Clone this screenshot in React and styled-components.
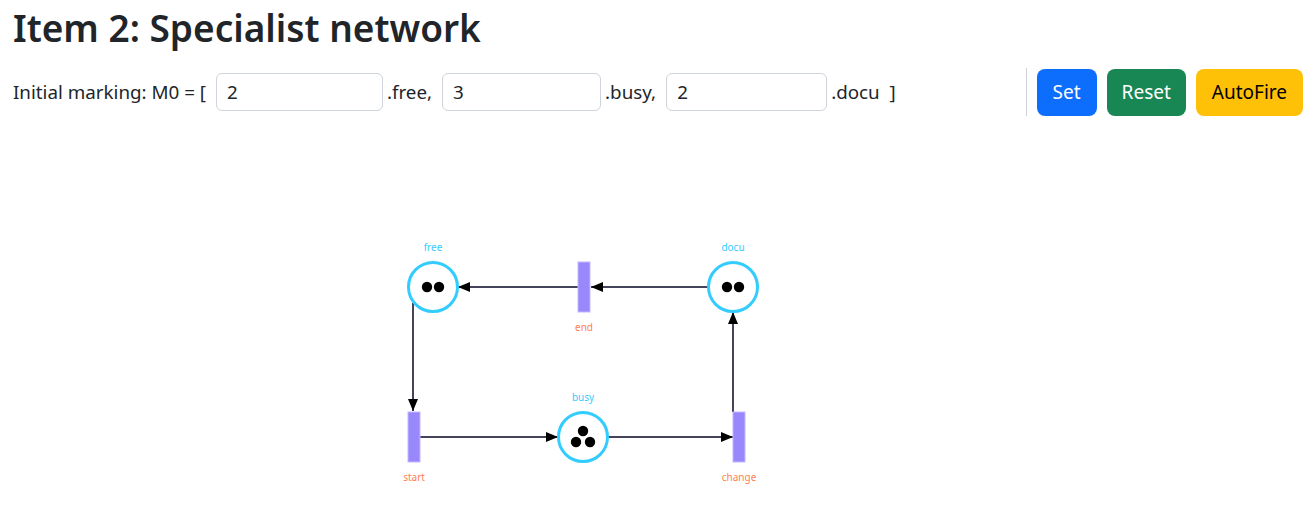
import React from 'react';
import styled, { createGlobalStyle } from 'styled-components';

const GlobalStyle = createGlobalStyle`
  body {
    margin: 0;
    font-family: "Noto Sans", "Open Sans", sans-serif;
    color: #212529;
    background: #fff;
  }
`;

const places = [
  { id: 'free', x: 433, y: 287, tokens: 2 },
  { id: 'docu', x: 733, y: 287, tokens: 2 },
  { id: 'busy', x: 583, y: 437, tokens: 3 },
];

const transitions = [
  { id: 'end', x: 578, y: 262 },
  { id: 'start', x: 408, y: 412 },
  { id: 'change', x: 733, y: 412 },
];

const arcs = [
  { x1: 708, y1: 287, x2: 591, y2: 287 },
  { x1: 578, y1: 287, x2: 458, y2: 287 },
  { x1: 413, y1: 303, x2: 413, y2: 411 },
  { x1: 420, y1: 437, x2: 558, y2: 437 },
  { x1: 608, y1: 437, x2: 733, y2: 437 },
  { x1: 733, y1: 412, x2: 733, y2: 312 },
];

const OFFSET_Y = 130;

function tokenDots(place) {
  if (place.tokens === 2) {
    return [
      [place.x - 6, place.y],
      [place.x + 6, place.y],
    ];
  }
  return [
    [place.x, place.y - 6],
    [place.x - 7, place.y + 5],
    [place.x + 7, place.y + 5],
  ];
}

function PetriNet() {
  return (
    <NetCanvas width="1313" height="377" viewBox={`0 ${OFFSET_Y} 1313 377`}>
      <defs>
        <marker
          id="arrow"
          viewBox="0 0 12 10"
          refX="12"
          refY="5"
          markerWidth="12"
          markerHeight="10"
          markerUnits="userSpaceOnUse"
          orient="auto"
        >
          <path d="M0,0 L12,5 L0,10 z" fill="#000" />
        </marker>
      </defs>
      {arcs.map((a, i) => (
        <line
          key={i}
          x1={a.x1}
          y1={a.y1}
          x2={a.x2}
          y2={a.y2}
          stroke="#44445c"
          strokeWidth="2"
          markerEnd="url(#arrow)"
        />
      ))}
      {transitions.map((t) => (
        <g key={t.id}>
          <rect x={t.x} y={t.y} width="12" height="50" fill="#9988fb" stroke="#c2b8ff" strokeWidth="1" />
          <text x={t.x + 6} y={t.y + 69} textAnchor="middle" fill="#ff7f50" fontSize="10">
            {t.id}
          </text>
        </g>
      ))}
      {places.map((p) => (
        <g key={p.id}>
          <circle cx={p.x} cy={p.y} r="24.5" fill="#fff" stroke="#33ccff" strokeWidth="3" />
          {tokenDots(p).map(([cx, cy], i) => (
            <circle key={i} cx={cx} cy={cy} r="5.2" fill="#000" />
          ))}
          <text x={p.x} y={p.y - 36} textAnchor="middle" fill="#33ccff" fontSize="10">
            {p.id}
          </text>
        </g>
      ))}
    </NetCanvas>
  );
}

export default function App() {
  return (
    <Page>
      <GlobalStyle />
      <Title>Item 2: Specialist network</Title>
      <Toolbar>
        <Marking>
          <Label>Initial marking: M0 = [</Label>
          <Field defaultValue="2" $width={167} />
          <Label>.free,</Label>
          <Field defaultValue="3" $width={159} />
          <Label>.busy,</Label>
          <Field defaultValue="2" $width={161} />
          <Label>.docu&nbsp; ]</Label>
        </Marking>
        <Divider />
        <Button $bg="#0d6efd" $fg="#fff">Set</Button>
        <Button $bg="#198754" $fg="#fff" $pad={15}>Reset</Button>
        <Button $bg="#ffc107" $fg="#000">AutoFire</Button>
      </Toolbar>
      <PetriNet />
    </Page>
  );
}

const Page = styled.div`
  padding: 0 10px 0 13px;
`;

const Title = styled.h1`
  margin: 0 0 12px;
  font-size: 37px;
  font-weight: 600;
  line-height: 56px;
`;

const Toolbar = styled.div`
  display: flex;
  align-items: center;
  gap: 10px;
`;

const Marking = styled.div`
  flex: 1;
  display: flex;
  align-items: center;
  font-size: 18.8px;
`;

const Label = styled.span`
  margin-right: 10px;
  line-height: 24px;
`;

const Field = styled.input`
  box-sizing: border-box;
  width: ${(p) => p.$width}px;
  height: 38px;
  margin-right: 4px;
  padding: 6px 10px;
  font: inherit;
  color: #212529;
  border: 1px solid #ced4da;
  border-radius: 6px;
  outline: none;
`;

const Divider = styled.div`
  width: 1px;
  height: 48px;
  background: #d0d0d0;
`;

const Button = styled.button`
  height: 47px;
  padding: 0 ${(p) => p.$pad ?? 16}px;
  font-family: inherit;
  font-size: 19px;
  color: ${(p) => p.$fg};
  background: ${(p) => p.$bg};
  border: none;
  border-radius: 8px;
`;

const NetCanvas = styled.svg`
  display: block;
  margin-left: -13px;
  margin-top: 14px;
  font-family: "Noto Sans", sans-serif;
`;
